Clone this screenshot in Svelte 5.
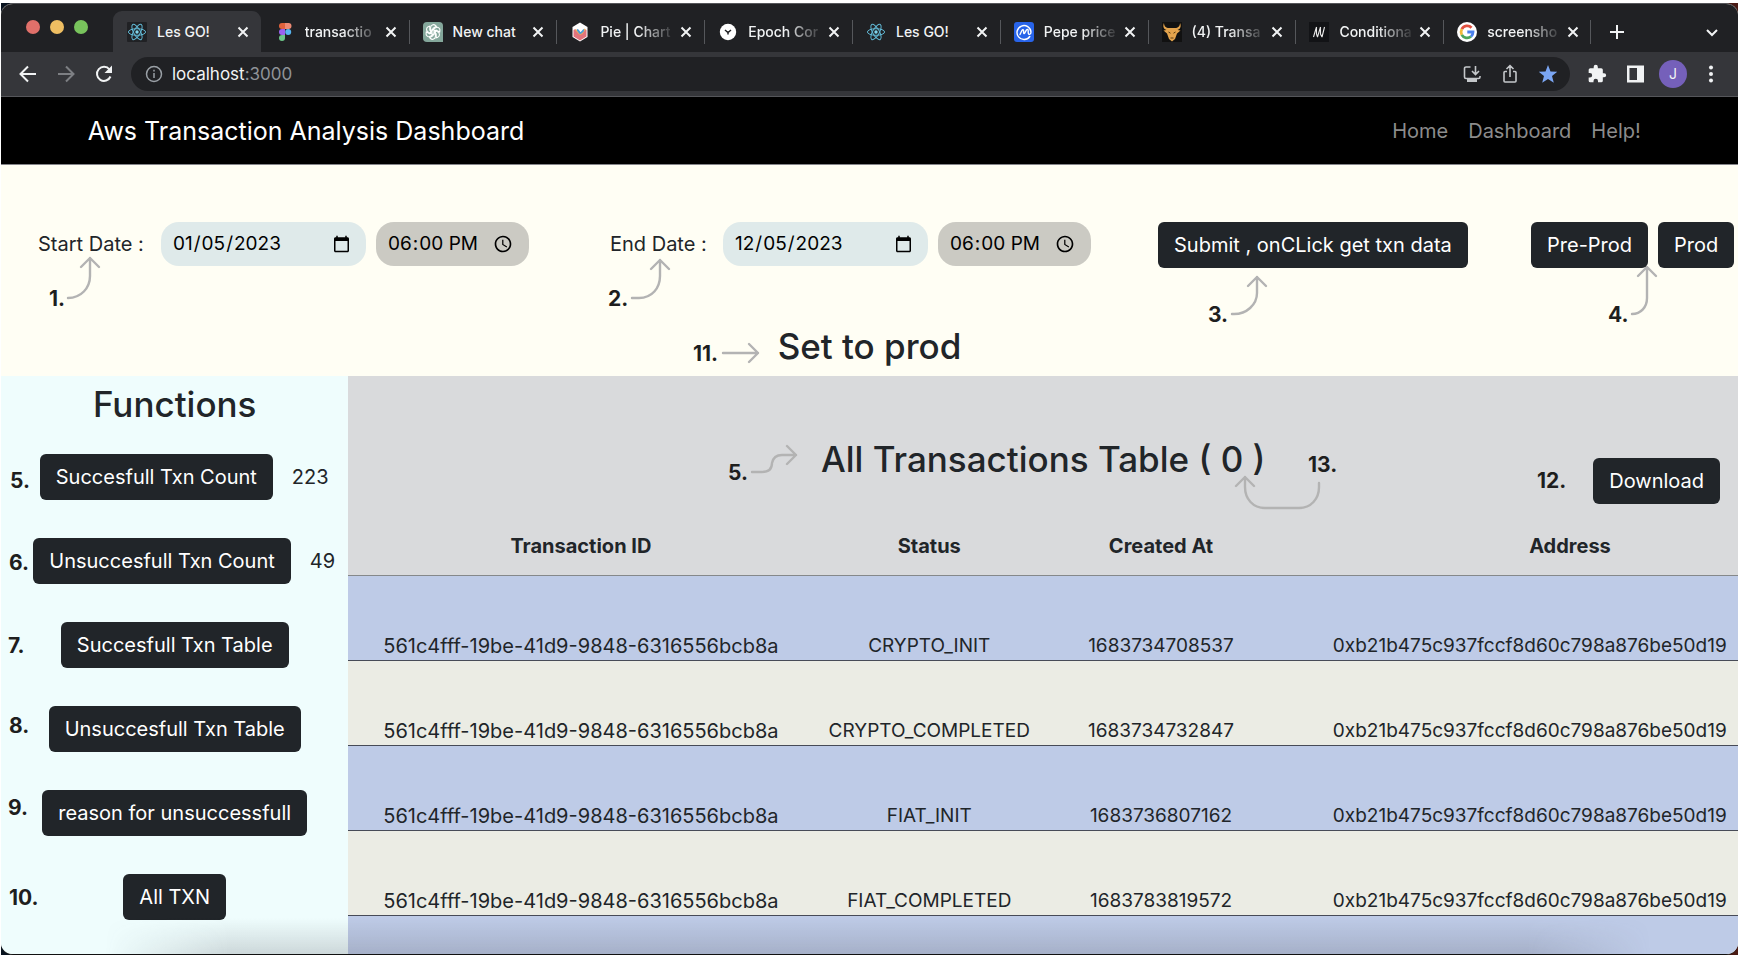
<script>
  const tabs = [
    { icon: 'react', title: 'Les GO!', active: true },
    { icon: 'figma', title: 'transactio', fade: true },
    { icon: 'chat', title: 'New chat' },
    { icon: 'chart', title: 'Pie | Chart', fade: true },
    { icon: 'clock', title: 'Epoch Cor', fade: true },
    { icon: 'react', title: 'Les GO!' },
    { icon: 'coin', title: 'Pepe price', fade: true },
    { icon: 'bull', title: '(4) Transa', fade: true },
    { icon: 'm', title: 'Conditiona', fade: true },
    { icon: 'google', title: 'screensho', fade: true }
  ];

  const functions = [
    { label: 'Succesfull Txn Count', count: 223 },
    { label: 'Unsuccesfull Txn Count', count: 49 },
    { label: 'Succesfull Txn Table' },
    { label: 'Unsuccesfull Txn Table' },
    { label: 'reason for unsuccessfull' },
    { label: 'All TXN' }
  ];

  const id = '561c4fff-19be-41d9-9848-6316556bcb8a';
  const address = '0xb21b475c937fccf8d60c798a876be50d19';
  const rows = [
    { status: 'CRYPTO_INIT', created: '1683734708537' },
    { status: 'CRYPTO_COMPLETED', created: '1683734732847' },
    { status: 'FIAT_INIT', created: '1683736807162' },
    { status: 'FIAT_COMPLETED', created: '1683783819572' }
  ];

  // Numbered callouts and their arrows, placed freely over the page.
  const notes = [
    { text: '1.', x: 49, y: 288 },
    { text: '2.', x: 608, y: 288 },
    { text: '3.', x: 1208, y: 304 },
    { text: '4.', x: 1608, y: 304 },
    { text: '11.', x: 693, y: 343 },
    { text: '5.', x: 10, y: 470 },
    { text: '6.', x: 9, y: 552 },
    { text: '7.', x: 8, y: 635 },
    { text: '8.', x: 9, y: 715 },
    { text: '9.', x: 8, y: 797 },
    { text: '10.', x: 9, y: 887 },
    { text: '5.', x: 728, y: 462 },
    { text: '13.', x: 1308, y: 454 },
    { text: '12.', x: 1537, y: 470 }
  ];
  const arrows = [
    'M68 298C81 298 90 288 90 276V258M81 267L90 258L99 267',
    'M632 298H639C652 298 660 288 660 276V260M651 269L660 260L669 269',
    'M1232 314C1247 315 1257 304 1257 293V277M1248 286L1257 277L1266 286',
    'M1632 314C1641 314 1647 307 1647 298V267M1638 276L1647 267L1656 276',
    'M723 353H758M749 344L758 353L749 362',
    'M752 472H762C769 472 772 469 772 463C773 458 776 455 782 455H796M787 446L796 455L787 464',
    'M1319 483V487C1319 499 1311 508 1299 508H1265C1253 508 1245 499 1245 487V477M1236 486L1245 477L1254 486'
  ];
</script>

{#snippet favicon(name)}
  <svg class="favicon" viewBox="0 0 20 20" aria-hidden="true">
    {#if name === 'react'}
      <rect width="20" height="20" rx="1" fill="#202124" />
      <g fill="none" stroke="#61b8d4" stroke-width="1">
        <ellipse cx="10" cy="10" rx="8.6" ry="3.3" />
        <ellipse cx="10" cy="10" rx="8.6" ry="3.3" transform="rotate(60 10 10)" />
        <ellipse cx="10" cy="10" rx="8.6" ry="3.3" transform="rotate(120 10 10)" />
      </g>
      <circle cx="10" cy="10" r="1.7" fill="#7fd6ee" />
    {:else if name === 'figma'}
      <path d="M7 1h3v6H7a3 3 0 0 1 0-6z" fill="#e0623c" />
      <path d="M10 1h3.500a3 3 0 0 1 0 6H10z" fill="#ec8a74" />
      <path d="M7 7h3v6H7a3 3 0 0 1 0-6z" fill="#9a62f0" />
      <circle cx="13.200" cy="10" r="3" fill="#56b4f0" />
      <path d="M7 13h3v3a3 3 0 1 1-3-3z" fill="#6cc688" />
    {:else if name === 'chat'}
      <path d="M4 0h12a4 4 0 0 1 4 4v16H4a4 4 0 0 1-4-4V4a4 4 0 0 1 4-4z" fill="#84a79b" />
      <g fill="none" stroke="#fff" stroke-width="1.100">
        {#each [0, 60, 120, 180, 240, 300] as a}
          <path d="M10 7.300l-2.400 1.400V5.600a2.900 2.900 0 0 1 4.900-2.100l.9.800L10 6.300v3" transform={`rotate(${a} 10 10)`} />
        {/each}
      </g>
    {:else if name === 'chart'}
      <path d="M10 0.500L17.500 5v10L10 19.500L2.500 15V5z" fill="#fff" />
      <path d="M3.500 8c3-3 4 3 6.500 3s4-5 6.500-3v6.500L10 18.500l-6.500-4z" fill="#e3747c" />
      <path d="M5.500 8c2 0 3 4 5 4s3-3 4.500-5" fill="none" stroke="#f2b457" stroke-width="1.500" />
      <path d="M7 8c2 0 2 3 3.500 3S13 8 14 8" fill="none" stroke="#4b9bd8" stroke-width="2" />
    {:else if name === 'clock'}
      <circle cx="10" cy="10" r="8.200" fill="#fff" />
      <path d="M7 8L10 10.500L13 8M10 10.500v2" fill="none" stroke="#202124" stroke-width="1.500" />
    {:else if name === 'coin'}
      <rect width="20" height="20" rx="3" fill="#2864ea" />
      <path d="M15.800 14.500A7 7 0 1 1 17 10c0 3-2.800 3-2.800.6V8.500c0-1.500-1.300-1.500-1.900-.3L10.800 11c-.5.900-1.200.7-1.200-.2V8.700c0-1.300-1.100-1.300-1.700-.2L6 12.500" fill="none" stroke="#fff" stroke-width="1.400" stroke-linecap="round" />
    {:else if name === 'bull'}
      <rect width="20" height="20" fill="#111" />
      <path d="M2 1C0.500 4 1.500 7 4.500 8L1.500 8.500L5 11.500L7 17l3 2.500l3-2.500l2-5.500l3.500-3L15.500 8C18.500 7 19.500 4 18 1c0 3-2 5-5 5H7C4 6 2 4 2 1z" fill="#e3a34c" />
      <path d="M6.500 10l2 1.200M13.500 10l-2 1.200M8.500 16h3" stroke="#5a3b12" stroke-width="1" />
    {:else if name === 'm'}
      <rect width="20" height="20" fill="#121316" />
      <path d="M4.500 15L7.500 5M8.500 15L11.500 5M13 15L15.500 5M7.500 5V12L8.500 15M11.500 5V12L13 15" fill="none" stroke="#e8e8e8" stroke-width="1.100" />
    {:else}
      <circle cx="10" cy="10" r="10" fill="#fff" />
      <g fill="none" stroke-width="2.800">
        <path d="M14.500 5.800A6 6 0 0 0 4.800 7.200" stroke="#e0503f" />
        <path d="M4.800 7.200a6 6 0 0 0 0 5.600" stroke="#f0b93a" />
        <path d="M4.800 12.800a6 6 0 0 0 9.200 1.700" stroke="#4ba55b" />
        <path d="M14 14.500A6 6 0 0 0 16 10H10.300" stroke="#4a80ec" />
      </g>
    {/if}
  </svg>
{/snippet}

<div class="page">
  <div class="desktop">
    <div class="window">
      <div class="strip">
        <div class="lights"><i class="red"></i><i class="yellow"></i><i class="green"></i></div>
        <div class="tabs">
          {#each tabs as tab}
            <div class="tab" class:active={tab.active}>
              {@render favicon(tab.icon)}
              <span class="title" class:fade={tab.fade}>{tab.title}</span>
              <button class="close" aria-label="Close tab">
                <svg viewBox="0 0 12 12"><path d="M1.500 1.500L10.500 10.500M10.500 1.500L1.500 10.500" /></svg>
              </button>
            </div>
          {/each}
        </div>
        <div class="strip-end">
          <button aria-label="New tab"><svg viewBox="0 0 16 16"><path d="M8 1V15M1 8H15" /></svg></button>
          <button aria-label="Search tabs"><svg viewBox="0 0 16 16"><path d="M3 6L8 11L13 6" /></svg></button>
        </div>
      </div>

      <div class="toolbar">
        <button class="tool" aria-label="Back">
          <svg viewBox="0 0 20 20"><path d="M18 10H3M10 2.500L2.500 10L10 17.500" /></svg>
        </button>
        <button class="tool dim" aria-label="Forward">
          <svg viewBox="0 0 20 20"><path d="M2 10H17M10 2.500L17.500 10L10 17.500" /></svg>
        </button>
        <button class="tool" aria-label="Reload">
          <svg viewBox="0 0 20 20"><path d="M16.500 12.500A7 7 0 1 1 15.500 5.500" /><path d="M18 1.500V9H10.500z" fill="#f1f3f4" stroke="none" /></svg>
        </button>
        <div class="omnibox">
          <svg class="info" viewBox="0 0 18 18"><circle cx="9" cy="9" r="7.500" /><path d="M9 8V13M9 4.800V6.500" /></svg>
          <a class="url" href="#top">localhost<span>:3000</span></a>
          <button aria-label="Install app">
            <svg viewBox="0 0 20 20"><path d="M8.500 3H4a1.500 1.500 0 0 0-1.500 1.500V13A1.500 1.500 0 0 0 4 14.500H16.500A1.500 1.500 0 0 0 18 13V12M13.500 2V10M10 7L13.500 10.500L17 7" /><path d="M5 14.500H15V18H5z" fill="#c4c7ca" stroke="none" /></svg>
          </button>
          <button aria-label="Share">
            <svg viewBox="0 0 20 20"><path d="M7 7.500H5A1 1 0 0 0 4 8.500V17A1 1 0 0 0 5 18H15A1 1 0 0 0 16 17V8.500A1 1 0 0 0 15 7.500H13M10 13V2M6.500 5L10 1.700L13.500 5" /></svg>
          </button>
          <button aria-label="Bookmark">
            <svg viewBox="0 0 20 20"><path d="M10 1L12.500 7.400L19.300 7.800L14 12.100L15.800 18.800L10 15L4.200 18.800L6 12.100L0.700 7.800L7.500 7.400z" fill="#7aa5f2" stroke="none" /></svg>
          </button>
        </div>
        <button class="tool" aria-label="Extensions">
          <svg viewBox="0 0 24 24"><path d="M20.500 11H19V7a2 2 0 0 0-2-2h-4V3.500a2.500 2.500 0 0 0-5 0V5H4a2 2 0 0 0-2 2v3.800h1.500a2.700 2.700 0 0 1 0 5.400H2V20a2 2 0 0 0 2 2h3.800v-1.500a2.700 2.700 0 0 1 5.400 0V22H17a2 2 0 0 0 2-2v-4h1.500a2.500 2.500 0 0 0 0-5z" fill="#f1f3f4" stroke="none" /></svg>
        </button>
        <button class="tool" aria-label="Side panel">
          <svg viewBox="0 0 20 20"><path d="M2 1.500H19V18.500H2zM4.500 4V16H12V4z" fill="#f1f3f4" fill-rule="evenodd" stroke="none" /></svg>
        </button>
        <button class="tool avatar" aria-label="Profile">J</button>
        <button class="tool" aria-label="Menu">
          <svg viewBox="0 0 20 20"><g fill="#f1f3f4" stroke="none"><circle cx="10" cy="3.500" r="2" /><circle cx="10" cy="10" r="2" /><circle cx="10" cy="16.500" r="2" /></g></svg>
        </button>
      </div>

      <header class="navbar" id="top">
        <a class="brand" href="#top">Aws Transaction Analysis Dashboard</a>
        <nav>
          <a href="#top">Home</a>
          <a href="#top">Dashboard</a>
          <a href="#top">Help!</a>
        </nav>
      </header>

      <section class="filters">
        <div class="controls">
          <div class="range">
            <label for="start-date">Start Date :</label>
            <input id="start-date" type="date" value="2023-01-05" />
            <input type="time" value="18:00" aria-label="Start time" />
          </div>
          <div class="range">
            <label for="end-date">End Date :</label>
            <input id="end-date" type="date" value="2023-12-05" />
            <input type="time" value="18:00" aria-label="End time" />
          </div>
          <div><button class="btn">Submit , onCLick get txn data</button></div>
          <div class="env">
            <button class="btn">Pre-Prod</button>
            <button class="btn">Prod</button>
          </div>
        </div>
        <h2>Set to prod</h2>
      </section>

      <div class="body">
        <aside>
          <h2>Functions</h2>
          {#each functions as f}
            <div class="fn" class:counted={f.count !== undefined}>
              <button class="btn">{f.label}</button>
              {#if f.count !== undefined}<output>{f.count}</output>{/if}
            </div>
          {/each}
        </aside>

        <main>
          <div class="heading">
            <h2>All Transactions Table ( 0 )</h2>
            <button class="btn">Download</button>
          </div>
          <table>
            <colgroup><col class="c-id" /><col class="c-mid" /><col class="c-mid" /><col /></colgroup>
            <thead>
              <tr><th>Transaction ID</th><th>Status</th><th>Created At</th><th>Address</th></tr>
            </thead>
            <tbody>
              {#each rows as row}
                <tr>
                  <td class="id">{id}</td>
                  <td>{row.status}</td>
                  <td>{row.created}</td>
                  <td class="address">{address}</td>
                </tr>
              {/each}
              <tr aria-hidden="true"><td colspan="4"></td></tr>
            </tbody>
          </table>
        </main>
      </div>
      <div class="dock-shadow"></div>
    </div>
  </div>

  <div class="notes">
    <svg aria-hidden="true">
      {#each arrows as d}<path {d} />{/each}
    </svg>
    {#each notes as n}
      <span style="left: {n.x}px; top: {n.y}px">{n.text}</span>
    {/each}
  </div>
</div>

<style>
  :global(body) {
    margin: 0;
    background: #fff;
  }
  * {
    box-sizing: border-box;
  }
  .page {
    position: relative;
    display: flex;
    height: 100vh;
    padding: 3px 4px 3px 1px;
    overflow: hidden;
    font-family: Inter, 'Liberation Sans', sans-serif;
    font-size: 20px;
    line-height: 24px;
    color: #212529;
  }
  .desktop {
    flex: 1;
    display: flex;
    min-width: 0;
    background: linear-gradient(90deg, #08131f 0 50%, #4a1a14 100%);
  }
  .window {
    position: relative;
    flex: 1;
    display: flex;
    flex-direction: column;
    min-width: 0;
    overflow: hidden;
    border-radius: 12px;
    border-top: 1px solid #55565a;
    border-bottom: 1px solid #111;
    background: #fffef4;
  }
  button {
    border: 0;
    padding: 0;
    background: none;
    font: inherit;
    color: inherit;
  }
  a {
    color: inherit;
    text-decoration: none;
  }
  svg {
    display: block;
    fill: none;
  }
  h2 {
    margin: 0;
    font-size: 35px;
    line-height: 40px;
    font-weight: 500;
    text-align: center;
    white-space: nowrap;
  }

  .strip {
    flex: none;
    display: flex;
    height: 48px;
    padding-top: 7px;
    background: #202124;
    color: #f1f3f4;
  }
  .lights {
    flex: none;
    display: flex;
    gap: 10px;
    width: 112px;
    padding: 9px 0 0 25px;
  }
  .lights i {
    width: 14px;
    height: 14px;
    border-radius: 50%;
  }
  .red { background: #e0706a; }
  .yellow { background: #eebe62; }
  .green { background: #78c35c; }
  .tabs {
    flex: 1;
    display: flex;
    min-width: 0;
  }
  .tab {
    position: relative;
    flex: 1;
    min-width: 0;
    display: flex;
    align-items: center;
    padding: 0 12px 0 14px;
    font-size: 14px;
    font-weight: 500;
  }
  .tab:not(.active):nth-child(n + 3)::before,
  .tab:last-child::after {
    content: '';
    position: absolute;
    left: 0;
    top: 9px;
    height: 24px;
    width: 1px;
    background: #55575b;
  }
  .tab:last-child::after {
    left: auto;
    right: 0;
  }
  .tab.active {
    border-radius: 9px 9px 0 0;
    background: #35363a;
  }
  .favicon {
    flex: none;
    width: 20px;
    height: 20px;
    margin-right: 10px;
  }
  .title {
    flex: 1;
    min-width: 0;
    margin-right: 4px;
    overflow: hidden;
    white-space: nowrap;
  }
  .fade {
    mask-image: linear-gradient(90deg, #000 50%, transparent 100%);
  }
  .close svg {
    width: 12px;
    height: 12px;
    stroke: #f1f3f4;
    stroke-width: 2;
  }
  .strip-end {
    flex: none;
    width: 147px;
    display: flex;
    align-items: center;
    justify-content: space-between;
    padding: 0 18px;
  }
  .strip-end svg {
    width: 16px;
    height: 16px;
    stroke: #f1f3f4;
    stroke-width: 2;
  }

  .toolbar {
    flex: none;
    display: flex;
    align-items: center;
    gap: 10px;
    height: 45px;
    padding: 0 13px;
    border-bottom: 1px solid #55565a;
    background: #35363a;
    color: #f1f3f4;
  }
  .tool {
    flex: none;
    width: 28px;
    height: 28px;
    display: grid;
    place-items: center;
  }
  .tool svg,
  .omnibox button svg {
    width: 20px;
    height: 20px;
    stroke: #f1f3f4;
    stroke-width: 2;
  }
  .dim svg {
    stroke: #7d7f83;
  }
  .avatar {
    border-radius: 50%;
    background: #7560ba;
    font-size: 14px;
  }
  .omnibox {
    flex: 1;
    display: flex;
    align-items: center;
    gap: 18px;
    height: 34px;
    margin: 0 3px;
    padding: 0 12px 0 14px;
    border-radius: 17px;
    background: #202124;
  }
  .omnibox button svg {
    stroke: #c4c7ca;
    stroke-width: 1.6;
  }
  .info {
    width: 18px;
    height: 18px;
    stroke: #9aa0a6;
    stroke-width: 1.5;
  }
  .url {
    flex: 1;
    margin-left: -9px;
    font-size: 17px;
  }
  .url span {
    color: #8f9398;
  }

  .navbar {
    flex: none;
    display: flex;
    align-items: center;
    justify-content: space-between;
    height: 68px;
    padding: 0 5.6% 0 5%;
    border-bottom: 1px solid #85858a;
    background: #000;
  }
  .brand {
    font-size: 25px;
    color: #fff;
  }
  nav {
    display: flex;
    gap: 20px;
    color: #8c8c8c;
  }

  .filters {
    flex: none;
    padding: 57px 0 10px 37px;
  }
  .controls {
    display: grid;
    grid-template-columns: 572fr 548fr 373fr 207fr;
  }
  .range {
    display: flex;
    align-items: center;
    height: 44px;
  }
  .range label {
    margin-right: auto;
    white-space: nowrap;
  }
  .range:nth-child(1) {
    margin-right: 81px;
  }
  .range:nth-child(2) {
    margin-right: 67px;
  }
  input {
    height: 44px;
    border: 0;
    border-radius: 18px;
    background: #dfeaea;
    font: inherit;
    font-size: 19px;
    color: #000;
    padding: 0 13px 0 11px;
  }
  input[type='date'] {
    width: 205px;
    margin-right: 10px;
  }
  input[type='time'] {
    width: 153px;
    background: #cbcac3;
  }
  .btn {
    height: 46px;
    padding: 0 16px;
    border-radius: 6px;
    background: #212529;
    color: #fff;
    white-space: nowrap;
  }
  .env {
    display: flex;
    gap: 10px;
  }
  .filters h2 {
    margin: 58px 37px 0 0;
  }

  .body {
    flex: 1;
    display: grid;
    grid-template-columns: 1fr 4fr;
    min-height: 0;
    overflow: hidden;
  }
  aside {
    display: flex;
    flex-direction: column;
    align-items: center;
    gap: 38px;
    padding-top: 8px;
    background: #effdfd;
  }
  aside h2 {
    margin-bottom: -8px;
  }
  .fn {
    display: flex;
    align-items: center;
    gap: 19px;
  }
  .counted {
    padding-left: 19px;
  }
  main {
    min-width: 0;
    overflow: hidden;
    background: #d9dadc;
  }
  .heading {
    display: grid;
    grid-template-columns: 1fr auto 1fr;
    align-items: start;
    padding: 63px 18px 0;
  }
  .heading h2 {
    grid-column: 2;
  }
  .heading .btn {
    justify-self: end;
    margin-top: 19px;
  }
  table {
    width: 109%;
    table-layout: fixed;
    border-collapse: separate;
    border-spacing: 0;
    text-align: center;
    white-space: nowrap;
  }
  .c-id { width: 30.7%; }
  .c-mid { width: 15.3%; }
  th {
    height: 72px;
    padding: 0 0 17px;
    border-bottom: 1px solid #85888a;
    vertical-align: bottom;
    font-weight: 700;
  }
  td {
    height: 85px;
    padding: 0 0 2px;
    border-bottom: 1px solid #474b57;
    vertical-align: bottom;
    font-size: 19px;
    background: #becbe7;
  }
  tr:nth-child(even) td {
    background: #ebece4;
  }
  .id {
    font-size: 20px;
  }
  .address {
    padding-left: 56px;
    text-align: left;
  }
  .dock-shadow {
    position: absolute;
    left: 6%;
    right: 5%;
    bottom: 0;
    height: 36px;
    background: linear-gradient(transparent, rgba(70, 70, 80, 0.2));
    mask-image: linear-gradient(90deg, transparent, #000 8% 92%, transparent);
    pointer-events: none;
  }

  .notes {
    position: absolute;
    inset: 0;
    pointer-events: none;
  }
  .notes svg {
    width: 100%;
    height: 100%;
    stroke: #b3b3b3;
    stroke-width: 2.4;
    stroke-linecap: round;
    stroke-linejoin: round;
  }
  .notes span {
    position: absolute;
    font-size: 21px;
    line-height: 21px;
    font-weight: 700;
    color: #1e1e1e;
  }
</style>
